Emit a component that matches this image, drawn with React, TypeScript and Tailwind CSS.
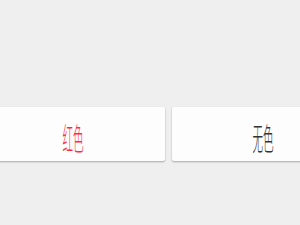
export default function App() {
  return (
    <div className="w-[300px] h-[225px] overflow-hidden bg-[#efefef]" style={{ fontFamily: '"Noto Sans CJK SC", "Noto Sans", sans-serif' }}>
      <div className="flex gap-[7px] pt-[107px] ml-[-19px]">
        <div className="w-[184px] h-[54px] shrink-0 bg-[#fdfdfd] rounded-[2px] shadow-[0_1px_2px_rgba(0,0,0,0.3)] flex items-center justify-center">
          <span className="inline-block text-[31px] leading-none font-light text-[#ff2a3c] scale-x-[0.34] translate-y-[2px]">红色</span>
        </div>
        <div className="w-[184px] h-[54px] shrink-0 bg-[#fdfdfd] rounded-[2px] shadow-[0_1px_2px_rgba(0,0,0,0.3)] flex items-center justify-center">
          <span className="inline-block text-[31px] leading-none font-light text-[#333] scale-x-[0.34] translate-y-[2px] -translate-x-[1px]">无色</span>
        </div>
      </div>
    </div>
  );
}
